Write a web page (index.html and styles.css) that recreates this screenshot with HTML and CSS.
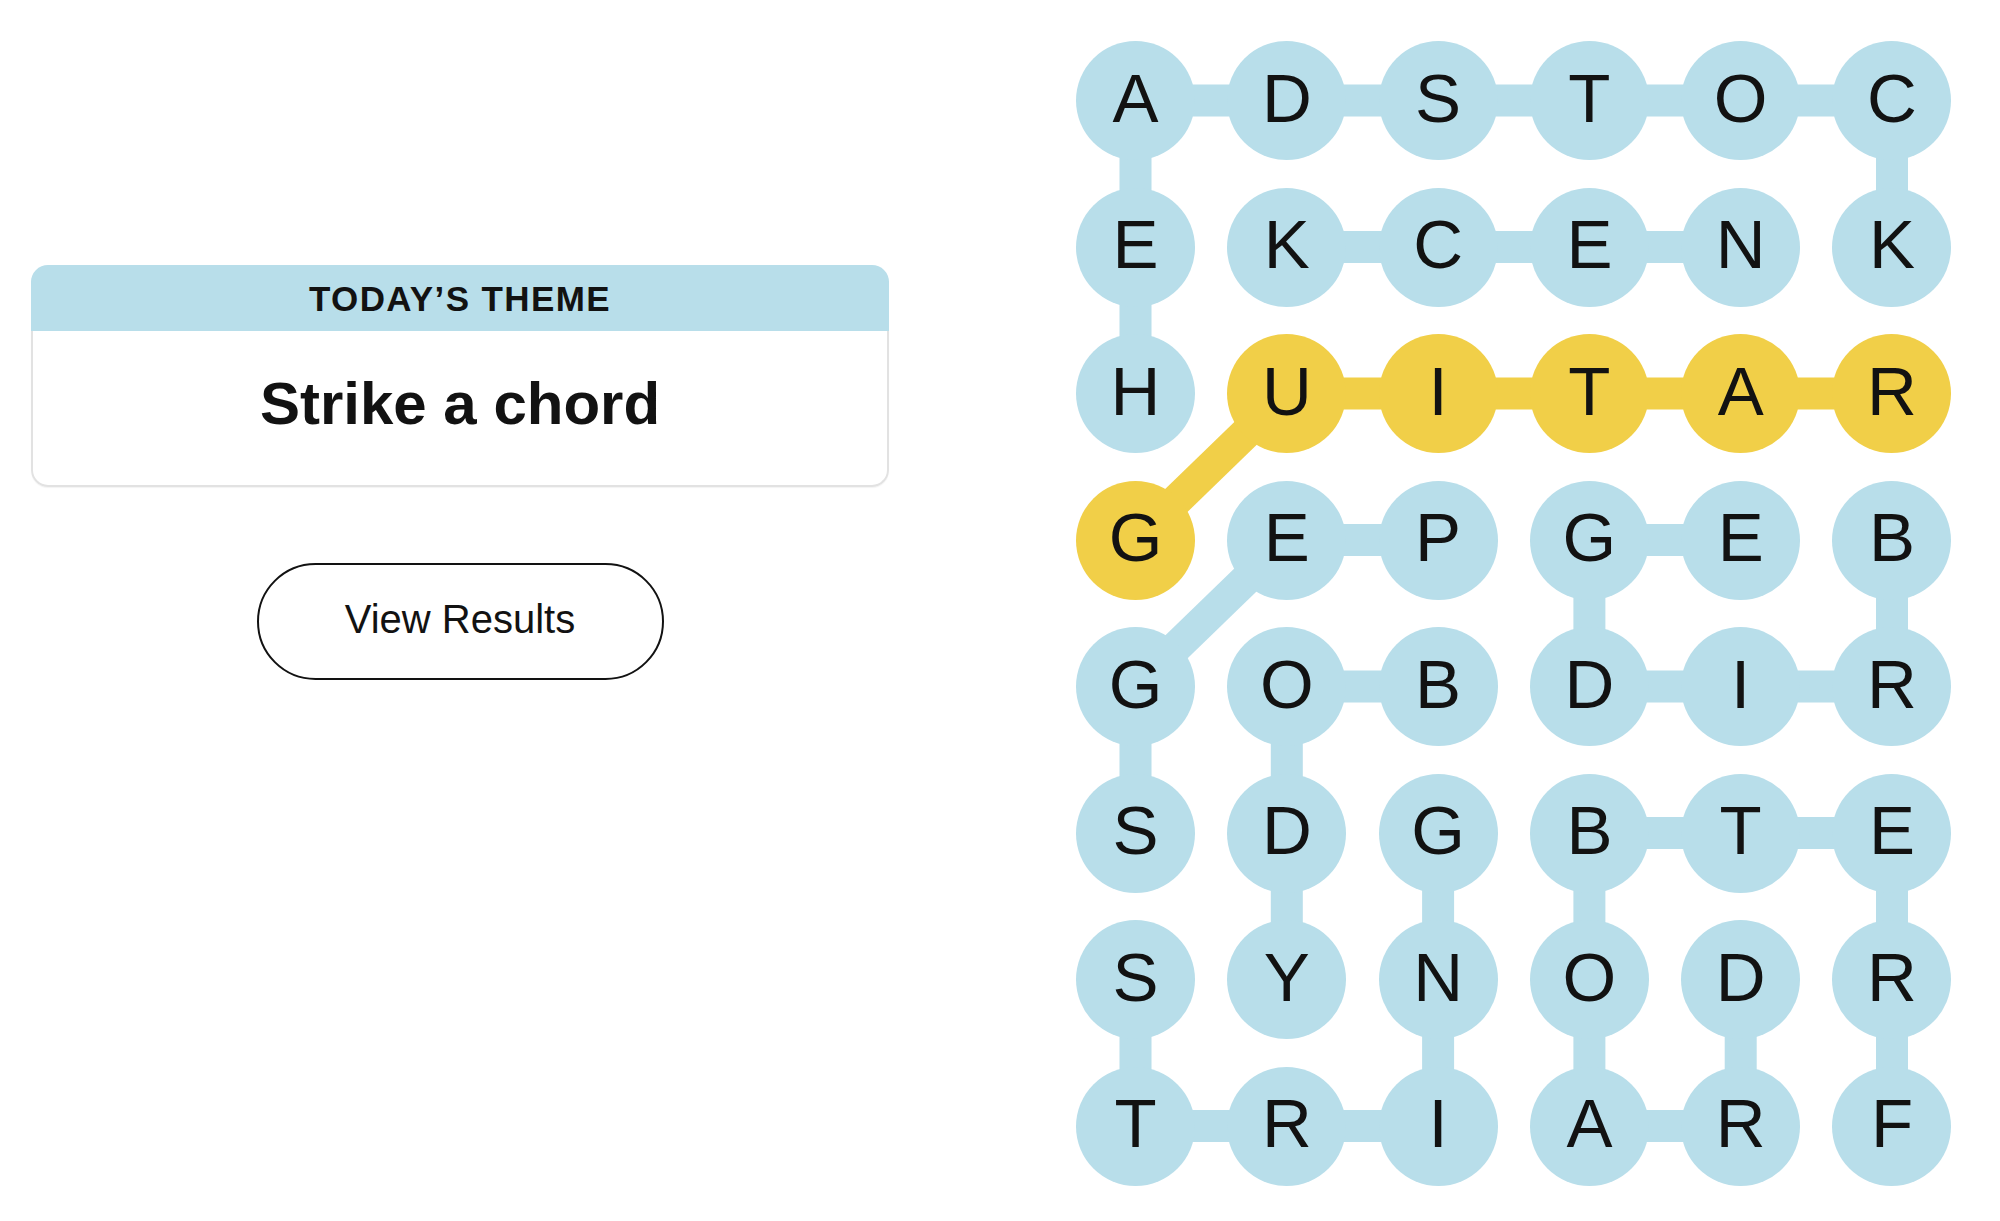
FILE: index.html
```html
<!DOCTYPE html>
<html lang="en">
<head>
<meta charset="utf-8">
<title>Strands</title>
<link rel="stylesheet" href="styles.css">
</head>
<body>
<main class="page">
  <section class="sidebar">
    <div class="theme-card">
      <h2 class="theme-head">TODAY’S THEME</h2>
      <div class="theme-body"><h1 class="theme-title">Strike a chord</h1></div>
    </div>
    <button class="results-btn" type="button">View Results</button>
  </section>

  <section class="board">
    <svg class="links" width="876" height="1145" viewBox="0 0 876 1145" aria-hidden="true">
      <g class="link-blue">
        <line x1="59.5" y1="59.5" x2="816" y2="59.5"/>
        <line x1="210.8" y1="206" x2="664.7" y2="206"/>
        <line x1="210.8" y1="499" x2="362.1" y2="499"/>
        <line x1="513.4" y1="499" x2="664.7" y2="499"/>
        <line x1="210.8" y1="645.5" x2="362.1" y2="645.5"/>
        <line x1="513.4" y1="645.5" x2="816" y2="645.5"/>
        <line x1="513.4" y1="792" x2="816" y2="792"/>
        <line x1="59.5" y1="1085" x2="362.1" y2="1085"/>
        <line x1="513.4" y1="1085" x2="664.7" y2="1085"/>

        <line x1="59.5" y1="59.5" x2="59.5" y2="352.5"/>
        <line x1="59.5" y1="645.5" x2="59.5" y2="792"/>
        <line x1="59.5" y1="938.5" x2="59.5" y2="1085"/>
        <line x1="210.8" y1="645.5" x2="210.8" y2="938.5"/>
        <line x1="362.1" y1="792" x2="362.1" y2="1085"/>
        <line x1="513.4" y1="499" x2="513.4" y2="645.5"/>
        <line x1="513.4" y1="792" x2="513.4" y2="1085"/>
        <line x1="664.7" y1="938.5" x2="664.7" y2="1085"/>
        <line x1="816" y1="59.5" x2="816" y2="206"/>
        <line x1="816" y1="499" x2="816" y2="645.5"/>
        <line x1="816" y1="792" x2="816" y2="1085"/>

        <line x1="210.8" y1="499" x2="59.5" y2="645.5"/>
      </g>
      <g class="link-gold">
        <line x1="210.8" y1="352.5" x2="816" y2="352.5"/>
        <line x1="210.8" y1="352.5" x2="59.5" y2="499"/>
      </g>
    </svg>

    <div class="grid">
      <div class="cell">A</div><div class="cell">D</div><div class="cell">S</div><div class="cell">T</div><div class="cell">O</div><div class="cell">C</div>
      <div class="cell">E</div><div class="cell">K</div><div class="cell">C</div><div class="cell">E</div><div class="cell">N</div><div class="cell">K</div>
      <div class="cell">H</div><div class="cell gold">U</div><div class="cell gold">I</div><div class="cell gold">T</div><div class="cell gold">A</div><div class="cell gold">R</div>
      <div class="cell gold">G</div><div class="cell">E</div><div class="cell">P</div><div class="cell">G</div><div class="cell">E</div><div class="cell">B</div>
      <div class="cell">G</div><div class="cell">O</div><div class="cell">B</div><div class="cell">D</div><div class="cell">I</div><div class="cell">R</div>
      <div class="cell">S</div><div class="cell">D</div><div class="cell">G</div><div class="cell">B</div><div class="cell">T</div><div class="cell">E</div>
      <div class="cell">S</div><div class="cell">Y</div><div class="cell">N</div><div class="cell">O</div><div class="cell">D</div><div class="cell">R</div>
      <div class="cell">T</div><div class="cell">R</div><div class="cell">I</div><div class="cell">A</div><div class="cell">R</div><div class="cell">F</div>
    </div>
  </section>
</main>
</body>
</html>
```

FILE: styles.css
```css
* { box-sizing: border-box; }

html, body {
  margin: 0;
  padding: 0;
  background: #ffffff;
  color: #121212;
  font-family: "Liberation Sans", Arial, sans-serif;
}

.page {
  display: flex;
  align-items: flex-start;
  width: 2000px;
  height: 1221px;
  overflow: hidden;
}

/* ---------- left column ---------- */
.sidebar {
  width: 858px;
  margin-left: 31px;
  padding-top: 265px;
  display: flex;
  flex-direction: column;
  align-items: center;
}

.theme-card {
  width: 100%;
  display: flex;
  flex-direction: column;
}

.theme-head {
  margin: 0;
  height: 66px;
  padding-top: 2px;
  line-height: 64px;
  background: #b8deea;
  border-radius: 17px 17px 0 0;
  text-align: center;
  font-size: 35px;
  font-weight: 700;
  letter-spacing: 1.4px;
  color: #121212;
}

.theme-body {
  height: 156px;
  padding-top: 38px;
  border: 2px solid #e2e2e2;
  border-top: none;
  border-radius: 0 0 17px 17px;
  box-shadow: 0 1px 1px rgba(0, 0, 0, 0.05);
  text-align: center;
}

.theme-title {
  margin: 0;
  font-size: 60px;
  line-height: 70px;
  font-weight: 700;
  color: #121212;
}

.results-btn {
  margin-top: 76px;
  width: 407px;
  height: 117px;
  padding: 0 0 4px;
  border: 2px solid #121212;
  border-radius: 60px;
  background: #ffffff;
  color: #121212;
  font-family: "Liberation Sans", Arial, sans-serif;
  font-size: 40px;
  font-weight: 400;
  display: flex;
  align-items: center;
  justify-content: center;
}

/* ---------- board ---------- */
.board {
  position: relative;
  margin-left: 187px;
  margin-top: 41px;
}

.links {
  position: absolute;
  left: 0;
  top: 0;
  z-index: 0;
}

.links line {
  stroke-width: 32;
  stroke-linecap: butt;
}

.link-blue line { stroke: #b8deea; }
.link-gold line { stroke: #f1cf48; }

.grid {
  position: relative;
  z-index: 1;
  display: grid;
  grid-template-columns: repeat(6, 119px);
  grid-auto-rows: 119px;
  column-gap: 32.3px;
  row-gap: 27.5px;
}

.cell {
  width: 119px;
  height: 119px;
  border-radius: 50%;
  background: #b8deea;
  display: flex;
  align-items: center;
  justify-content: center;
  padding-bottom: 5px;
  font-size: 69px;
  font-weight: 400;
  line-height: 1;
  color: #121212;
}

.cell.gold { background: #f1cf48; }
```
